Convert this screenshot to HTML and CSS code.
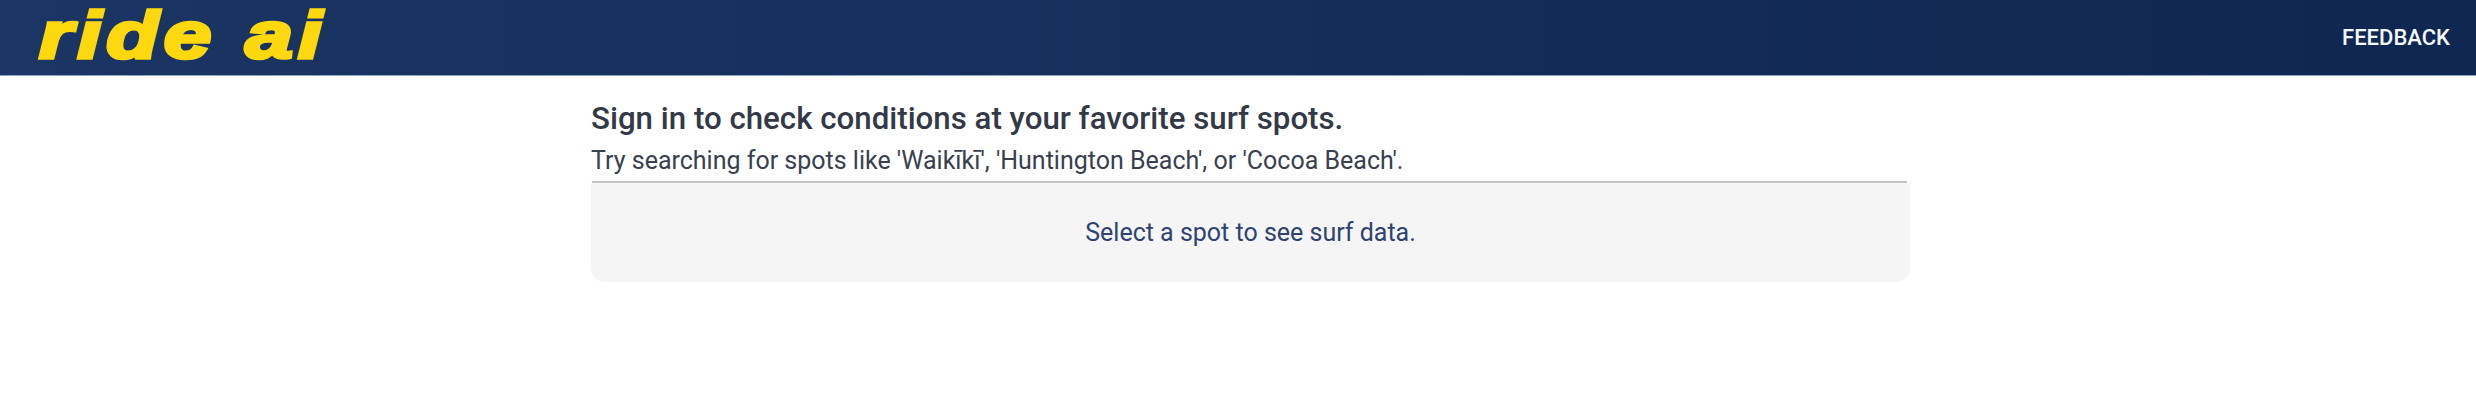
FILE: index.html
```html
<!DOCTYPE html>
<html lang="en">
<head>
<meta charset="utf-8">
<title>ride ai</title>
<link rel="stylesheet" href="styles.css">
</head>
<body>
<header class="topbar">
  <svg class="logo" viewBox="0 0 340 75" width="340" height="75" role="img" aria-label="ride ai">
    <text class="logo-text" x="39" y="57.5" textLength="288" lengthAdjust="spacingAndGlyphs">ride ai</text>
  </svg>
  <a class="feedback" href="#">FEEDBACK</a>
</header>
<main class="content">
  <h1 class="title">Sign in to check conditions at your favorite surf spots.</h1>
  <p class="hint">Try searching for spots like 'Waikīkī', 'Huntington Beach', or 'Cocoa Beach'.</p>
  <div class="rule"></div>
  <section class="panel">Select a spot to see surf data.</section>
</main>
</body>
</html>
```
FILE: styles.css
```css
* { box-sizing: border-box; }
html, body { margin: 0; padding: 0; background: #fff; }
body { font-family: Roboto, "Liberation Sans", sans-serif; height: 414px; overflow: hidden; }
.topbar {
  height: 76px;
  display: flex;
  align-items: center;
  justify-content: space-between;
  padding-right: 26px;
  background: linear-gradient(90deg, #1b3564 0%, #0f2750 100%);
  border-bottom: 1px solid #8ea3bd;
}
.logo { display: block; flex: none; }
.logo-text {
  font-family: "Liberation Sans", sans-serif;
  font-weight: 700;
  font-style: italic;
  font-size: 67px;
  letter-spacing: 4px;
  fill: #fdd80f;
  stroke: #fdd80f;
  stroke-width: 3.5px;
  stroke-linejoin: miter;
}
.feedback {
  color: #f4f7fb;
  font-size: 22px;
  font-weight: 500;
  text-decoration: none;
}
.content {
  width: 1319px;
  margin-left: 591px;
  padding-top: 24px;
}
.title {
  margin: 0;
  font-size: 31.25px;
  line-height: 37px;
  font-weight: 500;
  color: #333946;
}
.hint {
  margin: 9px 0 0;
  font-size: 25px;
  line-height: 30px;
  color: #3a404e;
}
.rule {
  margin: 5px 3px 0 1px;
  height: 2px;
  background: #c4c4c4;
}
.panel {
  height: 99px;
  background: #f5f5f5;
  border-radius: 0 0 14px 14px;
  display: flex;
  align-items: center;
  justify-content: center;
  font-size: 25px;
  color: #2f4270;
}
```
